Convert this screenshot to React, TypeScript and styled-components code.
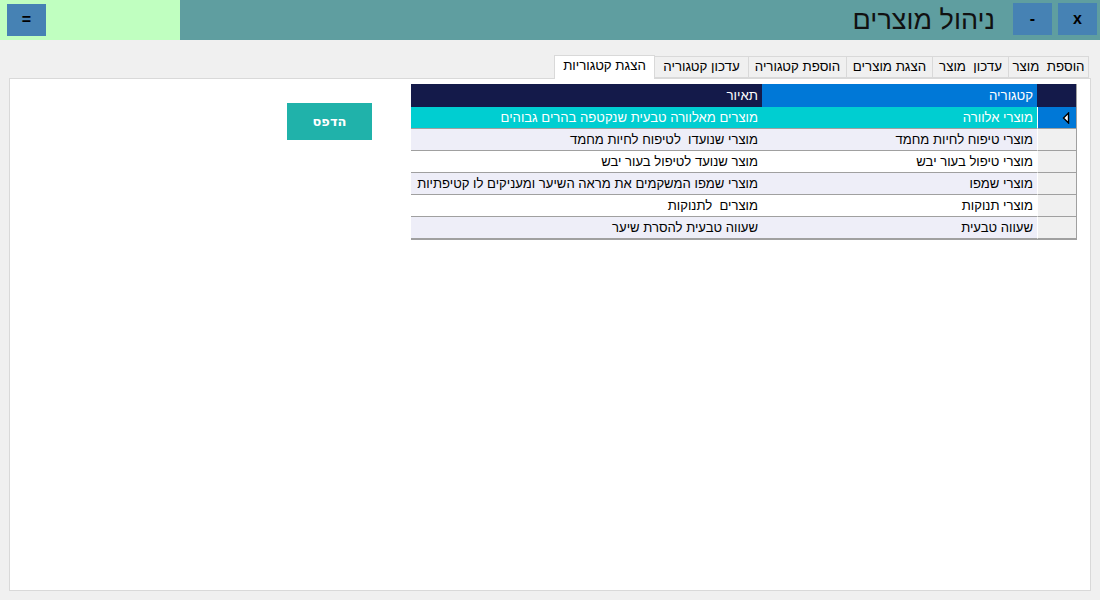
import React from "react";
import styled, { createGlobalStyle } from "styled-components";

const Global = createGlobalStyle`
  html, body { margin: 0; padding: 0; background: #f0f0f0; }
  body { font-family: "Liberation Sans", "DejaVu Sans", sans-serif; }
  * { box-sizing: border-box; }
`;

const Page = styled.div`
  width: 1100px;
  height: 600px;
  display: flex;
  flex-direction: column;
  background: #f0f0f0;
  overflow: hidden;
`;

const TopBar = styled.div`
  height: 40px;
  display: flex;
  direction: ltr;
`;

const MenuArea = styled.div`
  width: 180px;
  background: #c0ffc0;
  padding: 4px 7px;
`;

const TitleArea = styled.div`
  flex: 1;
  background: #5f9ea0;
  display: flex;
  justify-content: flex-end;
  align-items: flex-start;
  padding: 3px 3px 0 0;
  gap: 6px;
`;

const Title = styled.div`
  direction: rtl;
  font-size: 27px;
  line-height: 34px;
  color: #111;
  margin-right: 12px;
  font-family: "Liberation Sans", "DejaVu Sans", sans-serif;
`;

const BarButton = styled.button`
  width: 39px;
  height: 32px;
  background: #4682b4;
  border: none;
  padding: 0;
  margin: 0;
  color: #000;
  font-weight: bold;
  font-size: 16px;
  font-family: "Liberation Sans", sans-serif;
  display: flex;
  align-items: center;
  justify-content: center;
`;

const Content = styled.div`
  flex: 1;
  padding: 15px 9px 9px 9px;
  display: flex;
  flex-direction: column;
`;

const TabStrip = styled.div`
  direction: rtl;
  display: flex;
  align-items: flex-end;
  height: 23px;
  padding-right: 2px;
  position: relative;
  z-index: 1;
`;

const Tab = styled.div<{ $active?: boolean; $w: number }>`
  height: ${(p) => (p.$active ? 24 : 22)}px;
  margin-bottom: ${(p) => (p.$active ? -1 : 0)}px;
  border: 1px solid #d9d9d9;
  border-bottom: ${(p) => (p.$active ? "none" : "1px solid #d9d9d9")};
  margin-left: -1px;
  background: ${(p) => (p.$active ? "#ffffff" : "#f0f0f0")};
  font-size: 13.3px;
  line-height: 20px;
  color: #000;
  white-space: pre;
  width: ${(p) => p.$w}px;
  text-align: center;
`;

const Panel = styled.div`
  flex: 1;
  background: #fff;
  border: 1px solid #d9d9d9;
  direction: rtl;
  display: flex;
  align-items: flex-start;
  padding: 5px 13px 0 0;
`;

const Grid = styled.div`
  width: 666px;
  display: grid;
  grid-template-columns: 39px 275px 351px;
  border-bottom: 1px solid #a0a0a0;
  border-right: 1px solid #a0a0a0;
`;

const HeadCell = styled.div<{ $bg: string }>`
  height: 23px;
  background: ${(p) => p.$bg};
  color: #fff;
  font-size: 13.3px;
  line-height: 23px;
  padding-right: 4px;
  white-space: nowrap;
`;

const RowHead = styled.div<{ $sel?: boolean }>`
  height: 22px;
  background: ${(p) => (p.$sel ? "#0078d7" : "#f0f0f0")};
  border-bottom: 1px solid #a0a0a0;
  border-left: 1px solid #ffffff;
  display: flex;
  align-items: center;
  padding-right: 6px;
`;

const Cell = styled.div<{ $bg: string; $fg: string }>`
  height: 22px;
  background: ${(p) => p.$bg};
  border-bottom: 1px solid #a0a0a0;
  color: ${(p) => p.$fg};
  font-size: 13.1px;
  line-height: 21px;
  padding-right: 4px;
  white-space: pre;
  overflow: hidden;
`;

const PrintButton = styled.button`
  margin-top: 19px;
  margin-right: 39px;
  width: 85px;
  height: 37px;
  background: #20b2aa;
  color: #fff;
  border: none;
  font-weight: bold;
  font-size: 13px;
  font-family: "DejaVu Sans", "Liberation Sans", sans-serif;
`;

const rows = [
  ["מוצרי אלוורה", "מוצרים מאלוורה טבעית שנקטפה בהרים גבוהים"],
  ["מוצרי טיפוח לחיות מחמד", "מוצרי שנועדו  לטיפוח לחיות מחמד"],
  ["מוצרי טיפול בעור יבש", "מוצר שנועד לטיפול בעור יבש"],
  ["מוצרי שמפו", "מוצרי שמפו המשקמים את מראה השיער ומעניקים לו קטיפתיות"],
  ["מוצרי תנוקות", "מוצרים  לתנוקות"],
  ["שעווה טבעית", "שעווה טבעית להסרת שיער"],
];

const tabs: [string, number, boolean?][] = [
  ["הוספת  מוצר", 81],
  ["עדכון  מוצר", 77],
  ["הצגת מוצרים", 87],
  ["הוספת קטגוריה", 99],
  ["עדכון קטגוריה", 95],
  ["הצגת קטגוריות", 101, true],
];

const Arrow = () => (
  <svg width="8" height="12" viewBox="0 0 8 12">
    <path d="M6.5 1 L1.5 6 L6.5 11 Z" fill="#fff" stroke="#000" strokeWidth="1.4" strokeLinejoin="miter" />
  </svg>
);

export default function App() {
  return (
    <Page>
      <Global />
      <TopBar>
        <MenuArea>
          <BarButton>=</BarButton>
        </MenuArea>
        <TitleArea>
          <Title>ניהול מוצרים</Title>
          <BarButton>-</BarButton>
          <BarButton>x</BarButton>
        </TitleArea>
      </TopBar>
      <Content>
        <TabStrip>
          {tabs.map(([t, w, a]) => (
            <Tab key={t} $active={a} $w={w}>
              {t}
            </Tab>
          ))}
        </TabStrip>
        <Panel>
          <Grid>
            <HeadCell $bg="#141a4a" />
            <HeadCell $bg="#0078d7">קטגוריה</HeadCell>
            <HeadCell $bg="#141a4a">תאיור</HeadCell>
            {rows.map(([c, d], i) => {
              const bg = i === 0 ? "#00ced1" : i % 2 === 1 ? "#eeeef8" : "#ffffff";
              const fg = i === 0 ? "#ffffff" : "#000000";
              return (
                <React.Fragment key={c}>
                  <RowHead $sel={i === 0}>{i === 0 && <Arrow />}</RowHead>
                  <Cell $bg={bg} $fg={fg}>{c}</Cell>
                  <Cell $bg={bg} $fg={fg}>{d}</Cell>
                </React.Fragment>
              );
            })}
          </Grid>
          <PrintButton>הדפס</PrintButton>
        </Panel>
      </Content>
    </Page>
  );
}
